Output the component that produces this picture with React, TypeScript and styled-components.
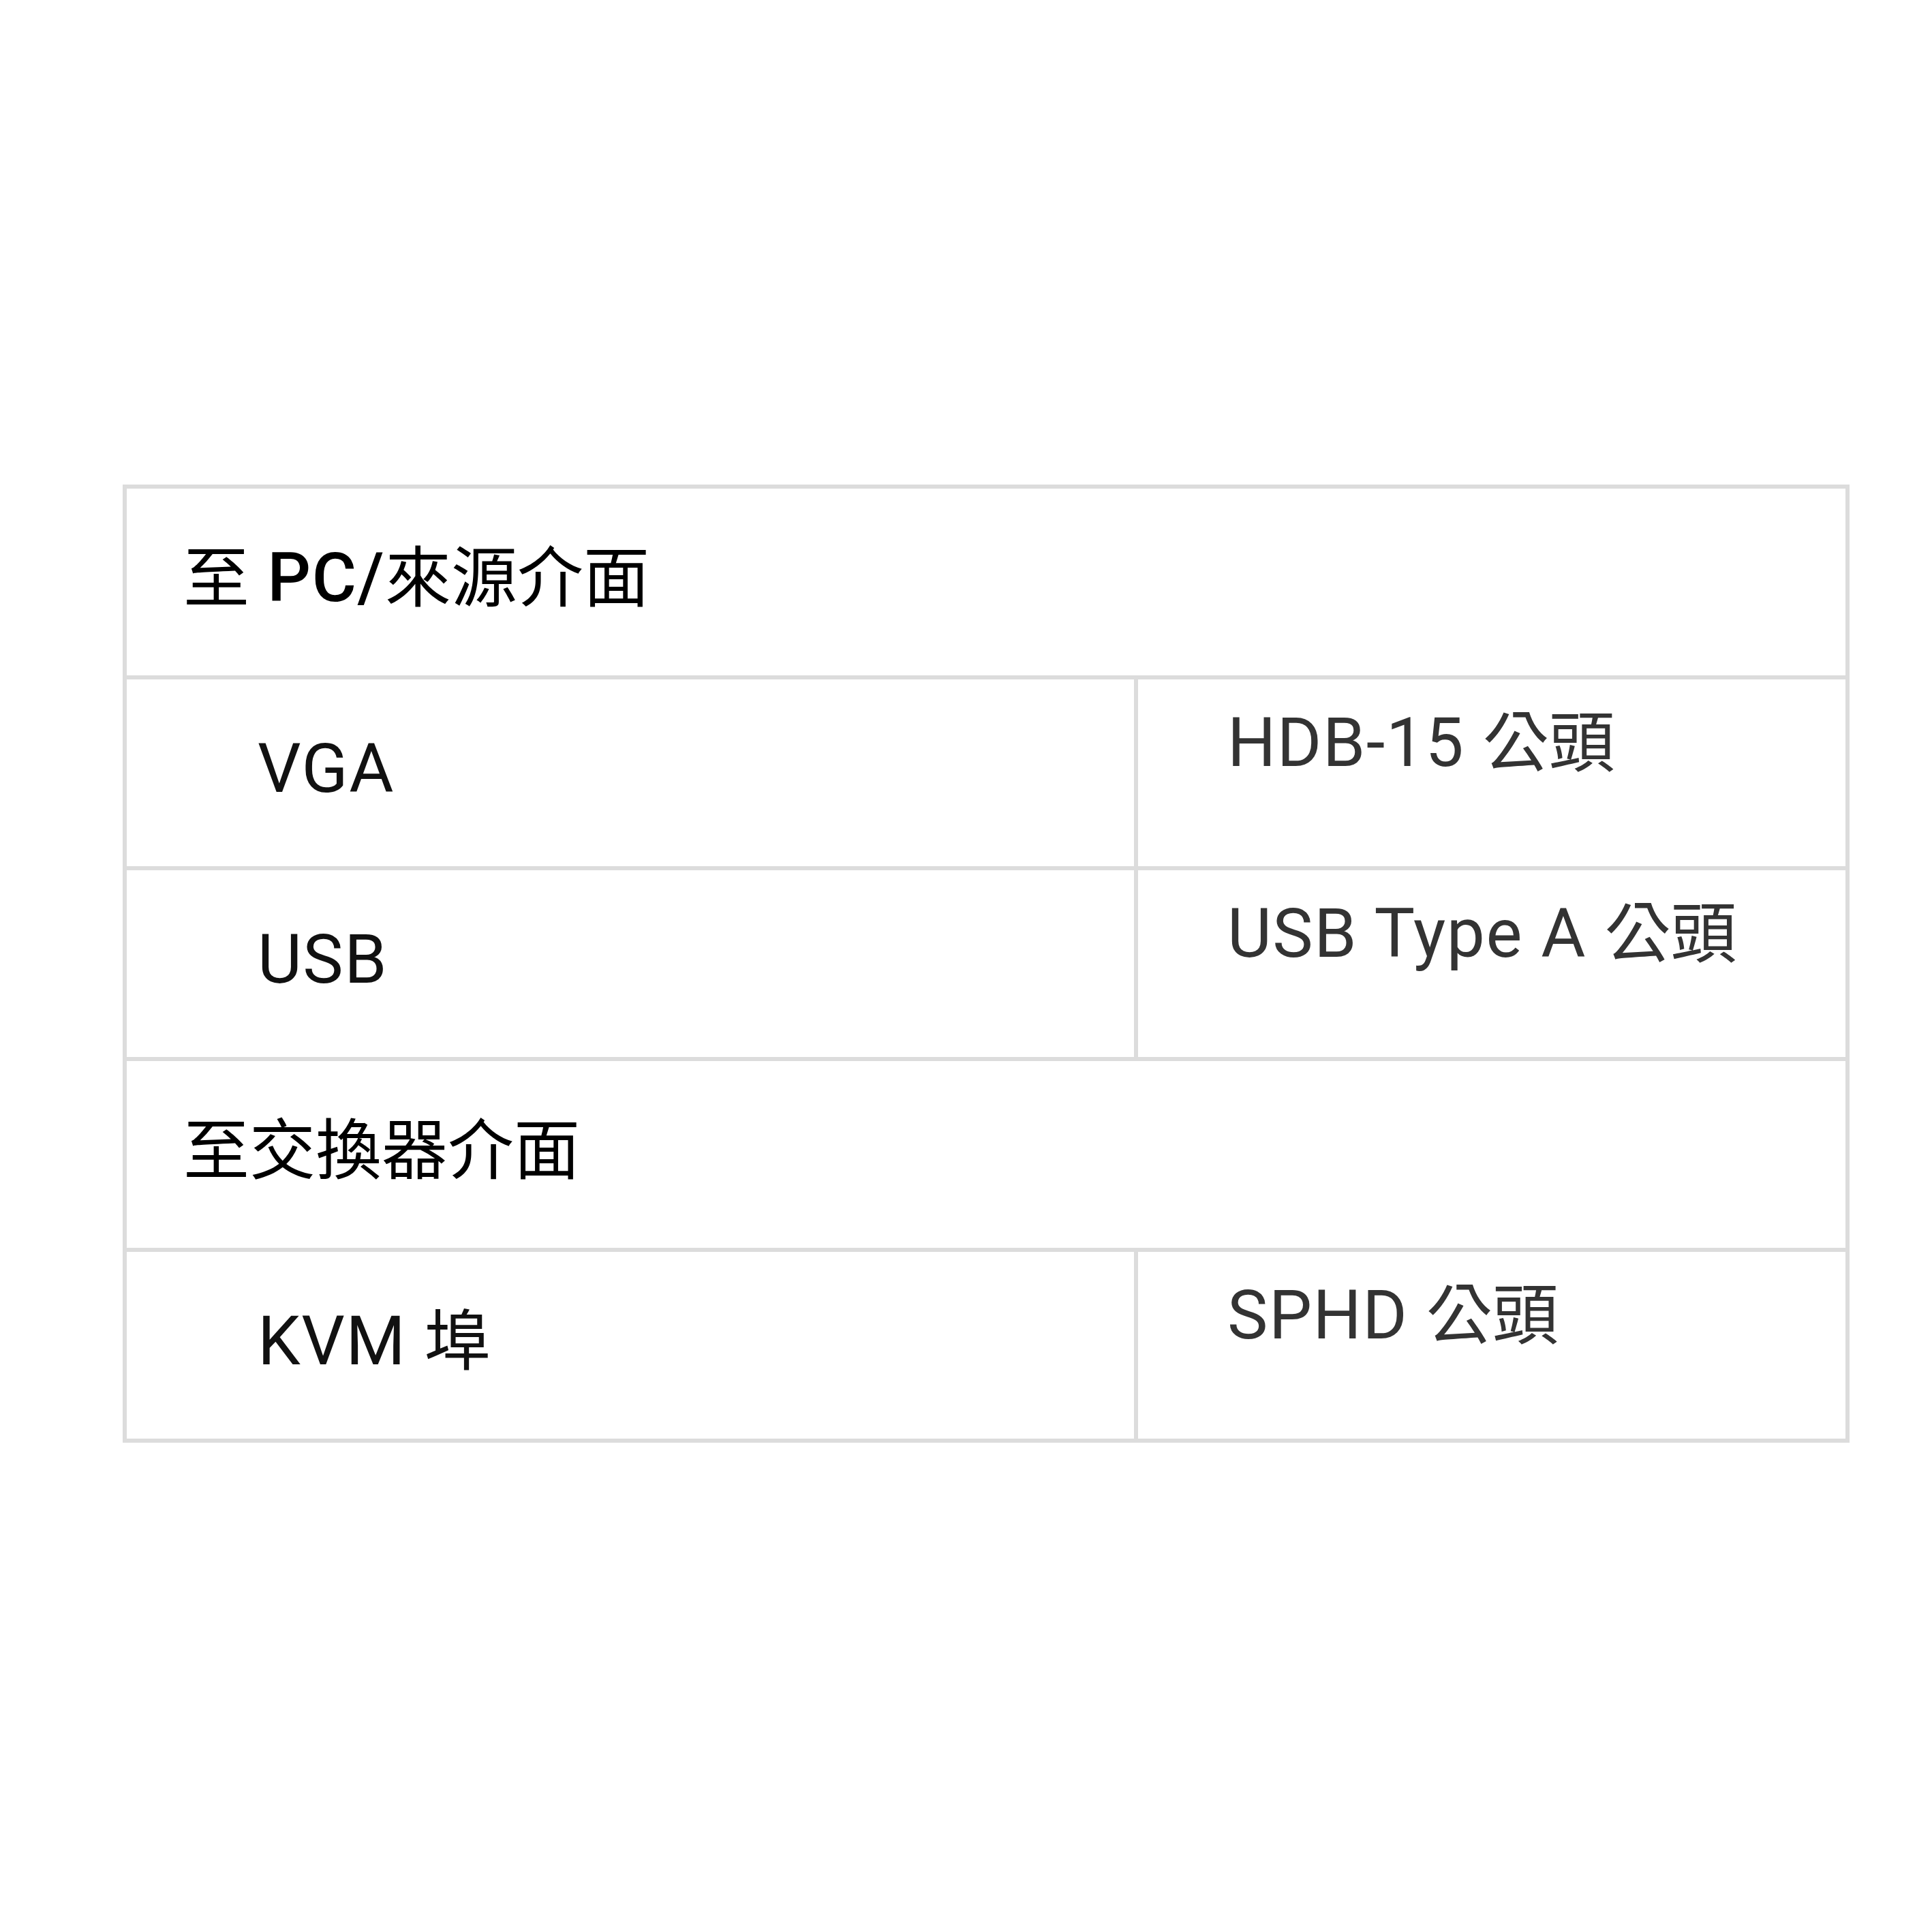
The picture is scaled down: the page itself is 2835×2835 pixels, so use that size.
import React from "react";
import styled, { createGlobalStyle } from "styled-components";

const GlobalStyle = createGlobalStyle`
  html, body {
    margin: 0;
    padding: 0;
    background: #ffffff;
  }
  body {
    font-family: Roboto, "Noto Sans CJK TC", sans-serif;
  }
`;

const Page = styled.main`
  box-sizing: border-box;
  width: 2835px;
  min-height: 2835px;
  padding: 711px 0 0 180px;
  background: #ffffff;
`;

const SpecTable = styled.section`
  box-sizing: border-box;
  width: 2534px;
  border: 6px solid #dcdcdc;
  display: flex;
  flex-direction: column;
`;

const Row = styled.div`
  display: grid;
  grid-template-columns: 1484px 1038px;
  height: 274px;
  & + & {
    border-top: 6px solid #dcdcdc;
  }
`;

const textBase = `
  box-sizing: border-box;
  font-size: 100px;
  line-height: 118px;
  letter-spacing: 1.5px;
  font-weight: 400;
  white-space: nowrap;
`;

const SectionTitle = styled.div`
  ${textBase}
  grid-column: 1 / -1;
  padding: 72px 0 0 83px;
  color: #000000;
`;

const LatinStrong = styled.span`
  font-weight: 500;
`;

const Han = styled.span`
  font-family: "Noto Sans CJK TC", sans-serif;
  font-size: 97px;
  line-height: 1;
  letter-spacing: 0;
  font-weight: 400;
`;

const LabelCell = styled.div`
  ${textBase}
  padding: 72px 0 0 192px;
  border-right: 6px solid #dcdcdc;
  color: #111111;
`;

const ValueCell = styled.div`
  ${textBase}
  padding: 34px 0 0 131px;
  color: #333333;
`;

const HAN_RUN = /([\u3000-\u9fff\uff00-\uffef]+)/;

function MixedText({ text }: { text: string }) {
  return (
    <>
      {text.split(HAN_RUN).map((part, i) =>
        HAN_RUN.test(part) ? <Han key={i}>{part}</Han> : part
      )}
    </>
  );
}

type Section = {
  key: string;
  title: React.ReactNode;
  rows: { label: string; value: string }[];
};

const sections: Section[] = [
  {
    key: "pc",
    title: (
      <>
        <Han>至</Han> <LatinStrong>PC/</LatinStrong>
        <Han>來源介面</Han>
      </>
    ),
    rows: [
      { label: "VGA", value: "HDB-15 公頭" },
      { label: "USB", value: "USB Type A 公頭" },
    ],
  },
  {
    key: "switch",
    title: <Han>至交換器介面</Han>,
    rows: [{ label: "KVM 埠", value: "SPHD 公頭" }],
  },
];

export default function App() {
  return (
    <>
      <GlobalStyle />
      <Page>
        <SpecTable>
          {sections.map((section) => (
            <React.Fragment key={section.key}>
              <Row>
                <SectionTitle>{section.title}</SectionTitle>
              </Row>
              {section.rows.map((row) => (
                <Row key={row.label}>
                  <LabelCell>
                    <MixedText text={row.label} />
                  </LabelCell>
                  <ValueCell>
                    <MixedText text={row.value} />
                  </ValueCell>
                </Row>
              ))}
            </React.Fragment>
          ))}
        </SpecTable>
      </Page>
    </>
  );
}
